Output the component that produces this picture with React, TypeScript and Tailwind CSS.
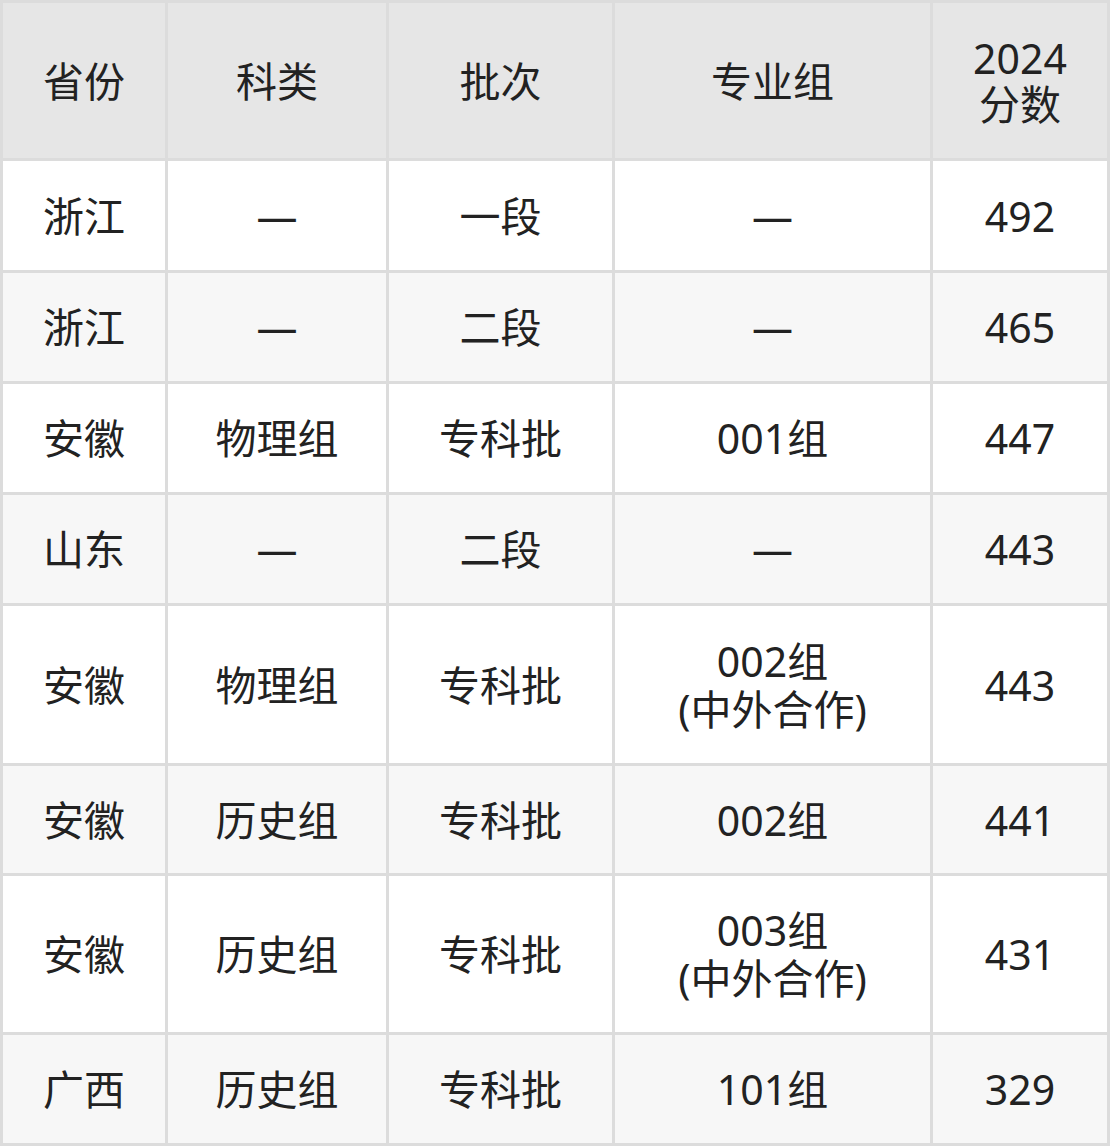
import React from "react";

type Row = { cells: React.ReactNode[]; bg: string };

const rows: Row[] = [
  { cells: ["浙江", "—", "一段", "—", "492"], bg: "bg-white" },
  { cells: ["浙江", "—", "二段", "—", "465"], bg: "bg-[#f7f7f7]" },
  { cells: ["安徽", "物理组", "专科批", "001组", "447"], bg: "bg-white" },
  { cells: ["山东", "—", "二段", "—", "443"], bg: "bg-[#f7f7f7]" },
  {
    cells: ["安徽", "物理组", "专科批", <>002组<br />(中外合作)</>, "443"],
    bg: "bg-white",
  },
  { cells: ["安徽", "历史组", "专科批", "002组", "441"], bg: "bg-[#f7f7f7]" },
  {
    cells: ["安徽", "历史组", "专科批", <>003组<br />(中外合作)</>, "431"],
    bg: "bg-white",
  },
  { cells: ["广西", "历史组", "专科批", "101组", "329"], bg: "bg-[#f7f7f7]" },
];

const headers: React.ReactNode[] = [
  "省份",
  "科类",
  "批次",
  "专业组",
  <>2024<br />分数</>,
];

export default function App() {
  return (
    <div
      className="w-[1110px] h-[1146px] bg-[#dcdcdc] p-[3px] grid grid-cols-[162px_218px_223px_315px_174px] grid-rows-[155px_109px_108px_108px_108px_157px_107px_156px_108px] gap-[3px] text-[41px] leading-[48px] text-[#222222]"
      style={{ fontFamily: '"Noto Sans", "Noto Sans CJK SC", sans-serif' }}
    >
      {headers.map((h, i) => (
        <div
          key={`h${i}`}
          className="bg-[#e6e6e6] flex items-center justify-center text-center leading-[46px]"
        >
          <div>{h}</div>
        </div>
      ))}
      {rows.map((r, ri) =>
        r.cells.map((c, ci) => (
          <div
            key={`${ri}-${ci}`}
            className={`${r.bg} flex items-center justify-center text-center`}
          >
            <div>{c}</div>
          </div>
        ))
      )}
    </div>
  );
}
